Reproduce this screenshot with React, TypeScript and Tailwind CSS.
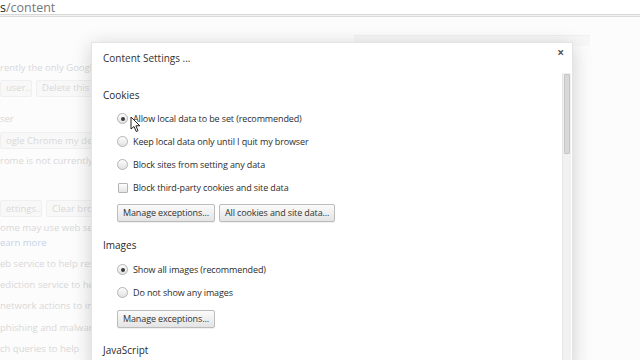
import React from 'react'

// Radio-kreis im Chrome-Stil
function Radio({ checked }: { checked?: boolean }) {
  return (
    <span className="w-[11px] h-[11px] rounded-full border border-[#b4b4b4] bg-gradient-to-b from-[#fdfdfd] to-[#e2e2e2] flex items-center justify-center shrink-0">
      {checked && <span className="w-[4px] h-[4px] rounded-full bg-[#3a3a3a]" />}
    </span>
  )
}

function Option({ label, checked, box }: { label: string; checked?: boolean; box?: boolean }) {
  return (
    <div className="h-[23px] flex items-center gap-[5px] pl-[14px]">
      {box ? (
        <span className="w-[10px] h-[10px] ml-[1px] rounded-[1px] border border-[#b4b4b4] bg-gradient-to-b from-[#fdfdfd] to-[#e4e4e4] shrink-0" />
      ) : (
        <Radio checked={checked} />
      )}
      <span className="text-[9px] tracking-[-0.12px] text-[#2c2c2c]">{label}</span>
    </div>
  )
}

function Btn({ children }: { children: React.ReactNode }) {
  return (
    <span className="h-[18px] px-[5px] flex items-center rounded-[2px] border border-[#bcbcbc] bg-gradient-to-b from-[#fbfbfb] to-[#e4e4e4] text-[9px] tracking-[-0.12px] text-[#333] shadow-[0_1px_0_rgba(0,0,0,0.06)]">
      {children}
    </span>
  )
}

// Verblasster Text der Einstellungsseite im Hintergrund
function Faded({ children, h = 'h-[22px]', link }: { children: React.ReactNode; h?: string; link?: boolean }) {
  return (
    <div className={`${h} flex items-center whitespace-nowrap text-[9.5px] ${link ? 'text-[#c6d3e8]' : 'text-[#d8d8d8]'}`}>
      {children}
    </div>
  )
}

function FadedBtn({ children, w }: { children: React.ReactNode; w: string }) {
  return (
    <span className={`${w} h-[17px] flex items-center px-[5px] border border-[#f0f0f0] rounded-[2px] bg-[#f8f8f8] text-[9.5px] text-[#d8d8d8] whitespace-nowrap overflow-hidden shrink-0`}>
      {children}
    </span>
  )
}

export default function App() {
  return (
    <div className="w-[640px] h-[360px] relative overflow-hidden bg-white" style={{ fontFamily: '"Open Sans", "Noto Sans", sans-serif' }}>
      {/* Adressleiste */}
      <div className="h-[14px] flex items-end pb-[1px] overflow-hidden">
        <span className="text-[12.5px] leading-none text-[#222] -mb-[1px]">s</span>
        <span className="text-[12.5px] leading-none text-[#777] -mb-[1px]">/content</span>
      </div>
      <div className="h-[1px] bg-[#d8d8d8]" />
      <div className="h-[1px] bg-[#f2f2f2]" />
      <div className="h-[1px] bg-[#dcdcdc]" />

      {/* Hintergrund: Einstellungsseite */}
      <div className="h-[343px] bg-[#fcfcfc] flex">
        <div className="w-[92px] overflow-hidden pt-[40px] flex flex-col">
          <Faded>rently the only Google Chrome user.</Faded>
          <div className="h-[20px] flex items-center gap-[4px]">
            <FadedBtn w="w-[32px]">user...</FadedBtn>
            <FadedBtn w="w-[70px]">Delete this user</FadedBtn>
          </div>
          <div className="h-[10px]" />
          <Faded h="h-[24px]">ser</Faded>
          <div className="h-[20px] flex items-center">
            <FadedBtn w="w-[100px]">ogle Chrome my default browser</FadedBtn>
          </div>
          <Faded h="h-[22px]">rome is not currently your default browser.</Faded>
          <div className="h-[28px]" />
          <div className="h-[20px] flex items-center gap-[4px]">
            <FadedBtn w="w-[42px]">ettings...</FadedBtn>
            <FadedBtn w="w-[60px]">Clear browsing data</FadedBtn>
          </div>
          <Faded h="h-[19px]">ome may use web services to</Faded>
          <Faded h="h-[12px]" link>earn more</Faded>
          <div className="h-[4px]" />
          <Faded>eb service to help resolve</Faded>
          <Faded>ediction service to help</Faded>
          <Faded>network actions to improve</Faded>
          <Faded>phishing and malware protection</Faded>
          <Faded>ch queries to help</Faded>
        </div>
        <div className="flex-1 pt-[18px] pl-[262px]">
          <div className="w-[236px] h-[11px] bg-[#f7f7f7] border-t border-[#f0f0f0]" />
        </div>
      </div>

      {/* Dialog */}
      <div className="absolute left-[91px] top-[42px] w-[482px] h-[330px] bg-white shadow-[0_3px_18px_rgba(0,0,0,0.18)] border border-[#e4e4e4]">
        <div className="h-[31px] flex items-center pl-[11px] text-[10px] text-[#333]">Content Settings ...</div>
        <span className="absolute right-[8px] top-[4px] text-[12px] leading-none text-[#555] font-bold">×</span>

        <div className="pl-[11px] flex flex-col">
          <div className="mt-[11px] h-[20px] flex items-center text-[10px] text-[#2a2a2a]">Cookies</div>
          <div className="mt-[2px]" />
          <Option label="Allow local data to be set (recommended)" checked />
          <Option label="Keep local data only until I quit my browser" />
          <Option label="Block sites from setting any data" />
          <Option label="Block third-party cookies and site data" box />
          <div className="mt-[5px] flex gap-[4px] pl-[14px]">
            <Btn>Manage exceptions...</Btn>
            <Btn>All cookies and site data...</Btn>
          </div>

          <div className="mt-[13px] h-[20px] flex items-center text-[10px] text-[#2a2a2a]">Images</div>
          <div className="mt-[3px]" />
          <Option label="Show all images (recommended)" checked />
          <Option label="Do not show any images" />
          <div className="mt-[6px] flex pl-[14px]">
            <Btn>Manage exceptions...</Btn>
          </div>

          <div className="mt-[12px] h-[20px] flex items-center text-[10px] text-[#2a2a2a]">JavaScript</div>
        </div>

        {/* Scrollleiste */}
        <div className="absolute right-[1px] top-[30px] bottom-0 w-[9px] bg-[#f1f1f1] border-l border-[#e6e6e6]">
          <div className="mt-[1px] mx-[1px] h-[80px] bg-[#d8d8d8] border border-[#c6c6c6] rounded-[1px]" />
        </div>
      </div>

      {/* Mauszeiger */}
      <svg className="absolute left-[130px] top-[116px]" width="11" height="17" viewBox="0 0 11 17">
        <path d="M1 1 L1 13 L4 10.5 L6.2 15.5 L8 14.7 L5.9 9.8 L9.8 9.8 Z" fill="#fff" stroke="#222" strokeWidth="1" strokeLinejoin="round" />
      </svg>
    </div>
  )
}
